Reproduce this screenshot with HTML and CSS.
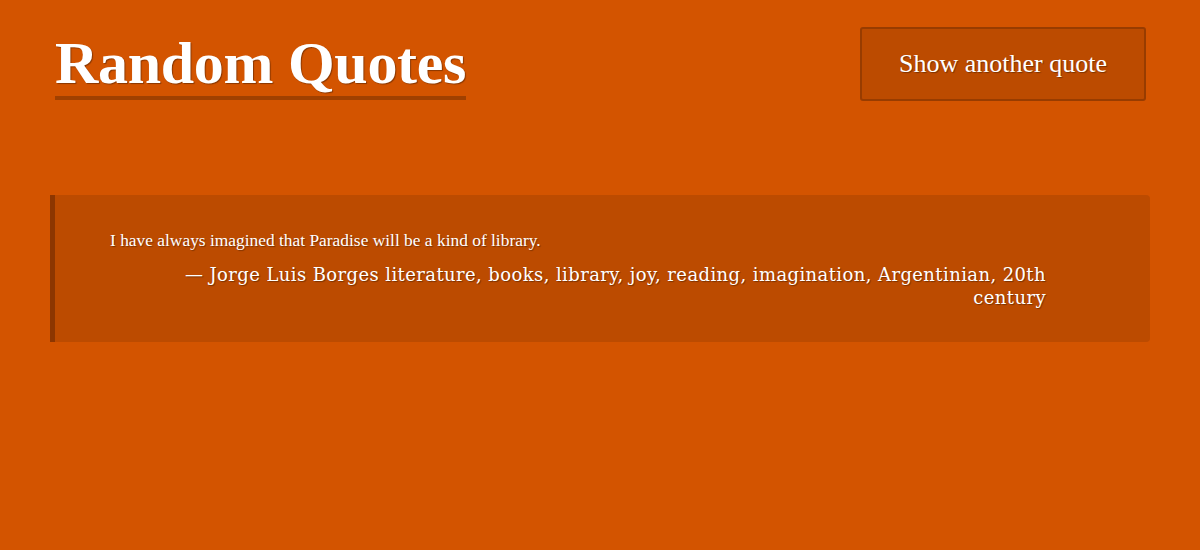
FILE: index.html
```html
<!DOCTYPE html>
<html lang="en">
<head>
<meta charset="utf-8">
<title>Random Quotes</title>
<link rel="stylesheet" href="styles.css">
</head>
<body>
<div class="page">
  <header class="top">
    <h1 class="title">Random Quotes</h1>
    <button class="btn" type="button">Show another quote</button>
  </header>
  <blockquote class="quote">
    <p class="quote-text">I have always imagined that Paradise will be a kind of library.</p>
    <p class="quote-by">— Jorge Luis Borges literature, books, library, joy, reading, imagination, Argentinian, 20th century</p>
  </blockquote>
</div>
</body>
</html>
```
FILE: styles.css
```css
html, body {
  margin: 0;
  padding: 0;
  background: #d35400;
  color: #fff;
  font-family: "Liberation Serif", "Times New Roman", serif;
}
.page {
  width: 1100px;
  margin: 0 auto;
  padding-top: 26px;
}
.top {
  display: flex;
  justify-content: space-between;
  align-items: flex-start;
  padding: 0 4px 0 5px;
}
.title {
  margin: 0;
  font-size: 60px;
  font-weight: bold;
  line-height: 66px;
  padding-top: 4px;
  border-bottom: 4px solid #a04000;
  letter-spacing: -0.3px;
  text-shadow: 1px 1px 1px rgba(0,0,0,0.35);
}
.btn {
  margin-top: 1px;
  width: 286px;
  height: 74px;
  background: #bc4b00;
  border: 2px solid #983c00;
  border-radius: 3px;
  color: #fff;
  font-family: "Liberation Serif", "Times New Roman", serif;
  font-size: 26px;
  text-shadow: 1px 1px 1px rgba(0,0,0,0.35);
  padding: 0;
}
.quote {
  margin: 94px 0 0 0;
  background: #bc4b00;
  border-left: 5px solid #8d3600;
  border-radius: 0 4px 4px 0;
  padding: 33px 104px 33px 55px;
}
.quote-text {
  margin: 0 0 11px 0;
  font-size: 17.4px;
  line-height: 24px;
  text-shadow: 1px 1px 1px rgba(0,0,0,0.35);
}
.quote-by {
  margin: 0 0 0 auto;
  max-width: 880px;
  text-align: right;
  font-family: "DejaVu Serif", Georgia, serif;
  font-size: 18px;
  line-height: 23px;
  letter-spacing: 0.4px;
  text-shadow: 1px 1px 1px rgba(0,0,0,0.35);
}
```
